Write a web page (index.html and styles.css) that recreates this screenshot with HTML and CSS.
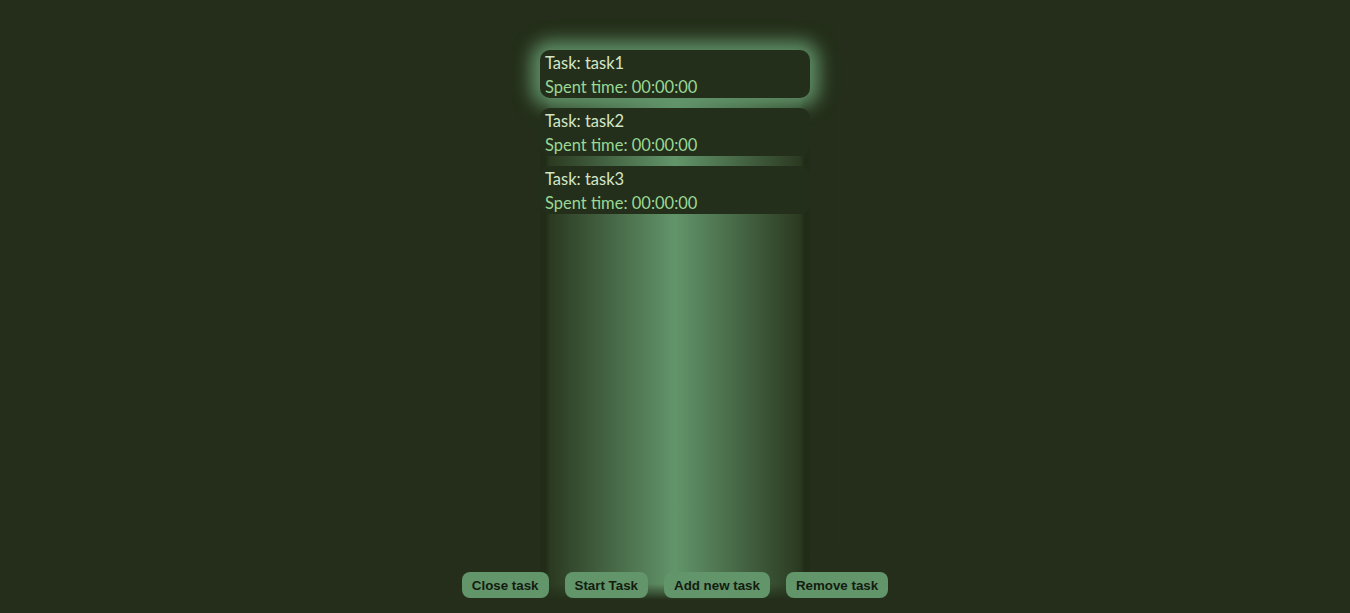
FILE: index.html
```html
<!DOCTYPE html>
<html>
<head>
<meta charset="utf-8">
<link rel="stylesheet" href="styles.css">
</head>
<body>
<div class="page">
  <div class="panel">
    <ul class="tasks">
      <li class="task selected">
        <div class="task-name">Task: task1</div>
        <div class="task-time">Spent time: 00:00:00</div>
      </li>
      <li class="task">
        <div class="task-name">Task: task2</div>
        <div class="task-time">Spent time: 00:00:00</div>
      </li>
      <li class="task">
        <div class="task-name">Task: task3</div>
        <div class="task-time">Spent time: 00:00:00</div>
      </li>
    </ul>
  </div>
  <div class="actions">
    <button class="btn">Close task</button>
    <button class="btn">Start Task</button>
    <button class="btn">Add new task</button>
    <button class="btn">Remove task</button>
  </div>
</div>
</body>
</html>
```
FILE: styles.css
```css
html, body {
  margin: 0;
  padding: 0;
  background: #242e1a;
  height: 100%;
  overflow: hidden;
}
.page {
  display: flex;
  flex-direction: column;
  align-items: center;
  padding-top: 10px;
}
.panel {
  box-sizing: border-box;
  width: 330px;
  height: 547px;
  border: 1px solid #262f1c;
  border-radius: 10px;
  padding: 39px 29px 0;
}
.tasks {
  list-style: none;
  margin: 0;
  padding: 0;
  height: 550px;
  display: flex;
  flex-direction: column;
  gap: 10px;
  position: relative;
  z-index: 0;
}
.tasks::before {
  content: "";
  position: absolute;
  inset: 0;
  z-index: -1;
  background: linear-gradient(to right, #222c18 0, #212b17 5px, #2b3a21 10px, #62956a 50%, #2b3a21 calc(100% - 10px), #212b17 calc(100% - 5px), #222c18 100%);
  -webkit-mask-image: linear-gradient(to bottom, #000 0, #000 calc(100% - 16px), transparent 100%);
  mask-image: linear-gradient(to bottom, #000 0, #000 calc(100% - 16px), transparent 100%);
}
.task {
  background: #232e1b;
  border-radius: 10px;
  padding: 1px 5px 0;
  font-family: Lato, "Open Sans", sans-serif;
  font-size: 16.5px;
  line-height: 24px;
  height: 48px;
  box-sizing: border-box;
}
.task.selected {
  box-shadow: 0 0 18px 9px rgba(98, 149, 106, 0.95);
}
.task-name {
  color: #d3e6c7;
}
.task-time {
  color: #9ad895;
}
.actions {
  display: flex;
  gap: 16px;
  margin-top: 15px;
  position: relative;
}
.btn {
  background: #62956a;
  border: none;
  border-radius: 8px;
  height: 26px;
  padding: 0 10px;
  font-family: "Liberation Sans", Arial, sans-serif;
  font-weight: bold;
  font-size: 13.33px;
  color: #141c10;
}
```
